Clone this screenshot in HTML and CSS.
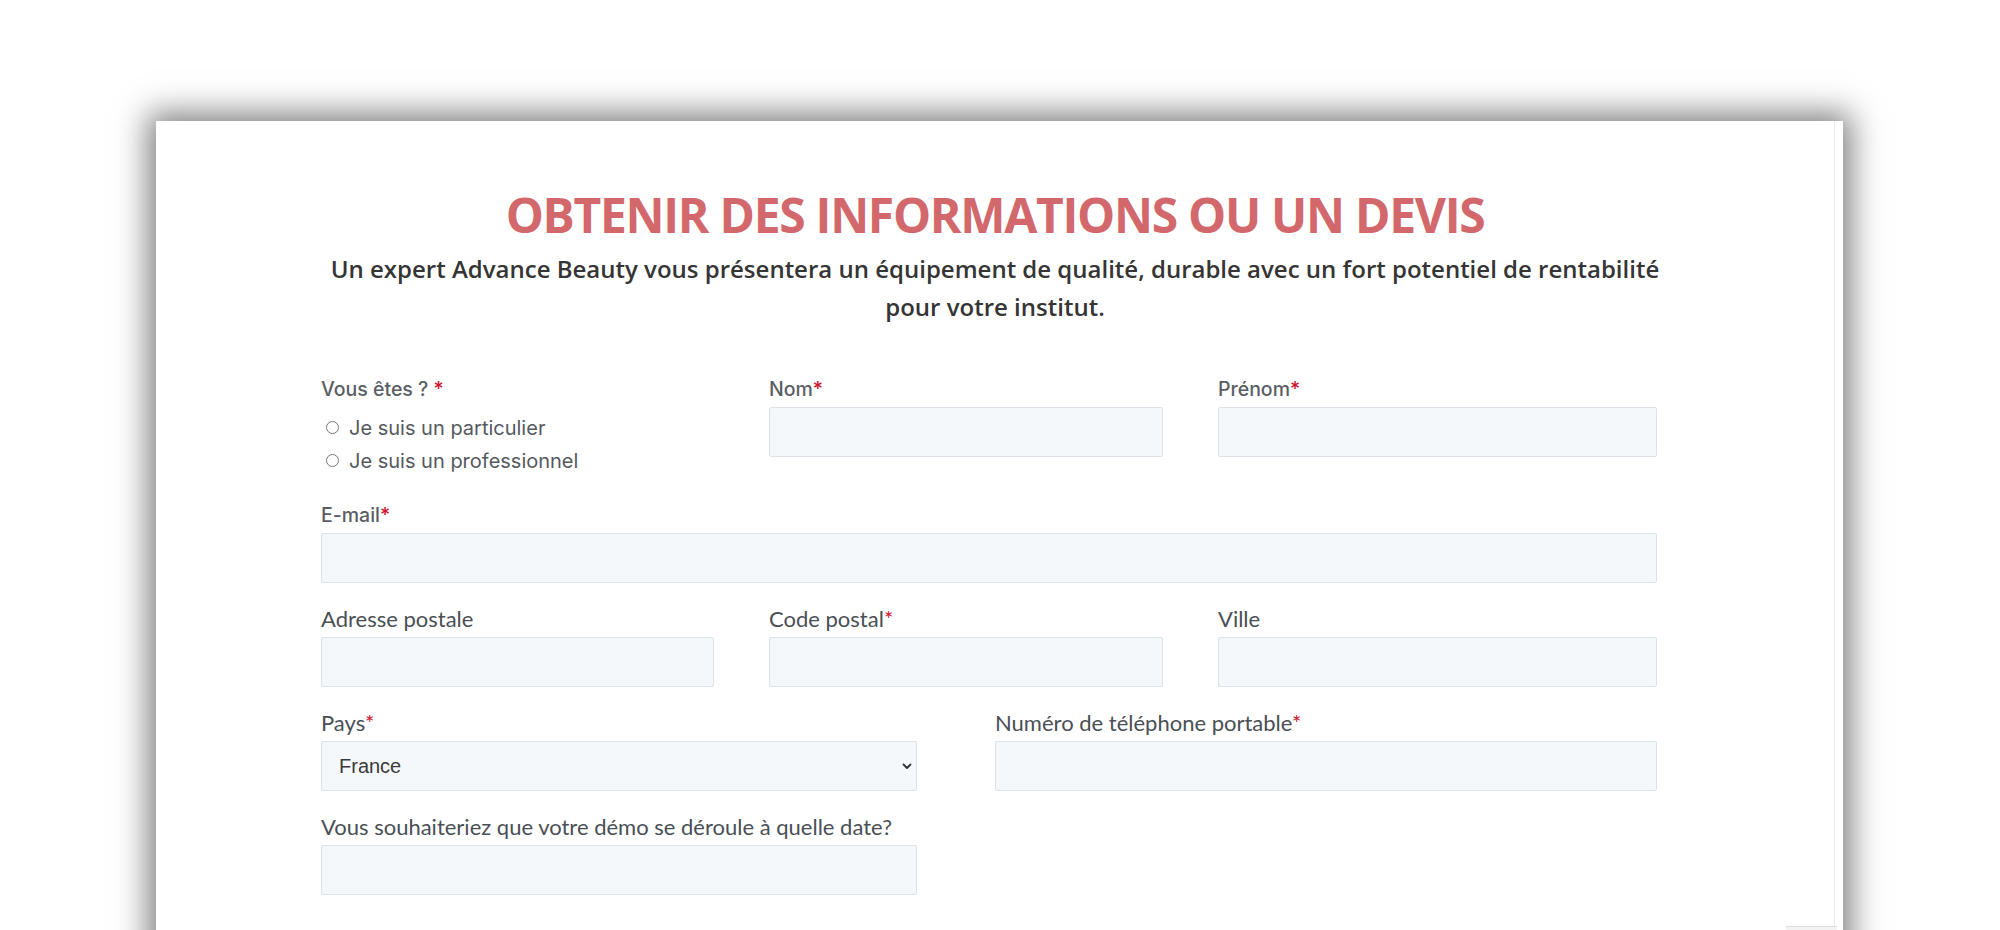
FILE: index.html
```html
<!DOCTYPE html>
<html lang="fr">
<head>
<meta charset="utf-8">
<title>Obtenir des informations ou un devis</title>
<link rel="stylesheet" href="styles.css">
</head>
<body>
<div class="page">
  <div class="card">
    <div class="inner">
      <h1 class="title">OBTENIR DES INFORMATIONS OU UN DEVIS</h1>
      <p class="lead">Un expert Advance Beauty vous présentera un équipement de qualité, durable avec un fort potentiel de rentabilité<br>pour votre institut.</p>
      <form class="form">
        <div class="row row-3 row-first">
          <div class="field">
            <div class="lbl lbl-m">Vous êtes ? <span class="req">*</span></div>
            <div class="radios">
              <label class="radio"><input type="radio" name="type" class="rb">Je suis un particulier</label>
              <label class="radio"><input type="radio" name="type" class="rb">Je suis un professionnel</label>
            </div>
          </div>
          <div class="field">
            <label class="lbl lbl-m">Nom<span class="req">*</span></label>
            <input type="text" class="inp">
          </div>
          <div class="field">
            <label class="lbl lbl-m">Prénom<span class="req">*</span></label>
            <input type="text" class="inp">
          </div>
        </div>
        <div class="row">
          <div class="field">
            <label class="lbl lbl-m">E-mail<span class="req">*</span></label>
            <input type="text" class="inp">
          </div>
        </div>
        <div class="row row-3">
          <div class="field">
            <label class="lbl lbl-l">Adresse postale</label>
            <input type="text" class="inp">
          </div>
          <div class="field">
            <label class="lbl lbl-l">Code postal<span class="req">*</span></label>
            <input type="text" class="inp">
          </div>
          <div class="field">
            <label class="lbl lbl-l">Ville</label>
            <input type="text" class="inp">
          </div>
        </div>
        <div class="row row-2">
          <div class="field">
            <label class="lbl lbl-l">Pays<span class="req">*</span></label>
            <div class="sel">
              <select class="inp select"><option>France</option></select>
              <svg class="chev" width="10" height="7" viewBox="0 0 10 7"><path d="M1.5 1.5 L5 5 L8.5 1.5" fill="none" stroke="#333" stroke-width="1.8" stroke-linecap="round" stroke-linejoin="round"/></svg>
            </div>
          </div>
          <div class="field">
            <label class="lbl lbl-l">Numéro de téléphone portable<span class="req">*</span></label>
            <input type="text" class="inp">
          </div>
        </div>
        <div class="row row-2">
          <div class="field">
            <label class="lbl lbl-l">Vous souhaiteriez que votre démo se déroule à quelle date?</label>
            <input type="text" class="inp">
          </div>
        </div>
      </form>
    </div>
    <div class="totop"></div>
  </div>
</div>
</body>
</html>
```
FILE: styles.css
```css
* { box-sizing: border-box; }
html, body { margin: 0; padding: 0; overflow: hidden; background: #ffffff; }
.page { height: 930px; overflow: hidden; padding: 121px 0 0 156px; }
.card {
  position: relative;
  width: 1687px;
  height: 900px;
  background: #ffffff;
  box-shadow: 0 0 30px 8px rgba(0, 0, 0, 0.5);
  padding-right: 8px;
}
.inner {
  width: 1679px;
  height: 900px;
  border-right: 1px solid #ececec;
  padding-top: 63px;
}
.title {
  margin: 0;
  text-align: center;
  font-family: "Open Sans", sans-serif;
  font-weight: 700;
  font-size: 48px;
  letter-spacing: -1.3px;
  line-height: 62px;
  color: #d2686b;
}
.lead {
  margin: 4px 0 0;
  text-align: center;
  font-family: "Open Sans", sans-serif;
  font-weight: 600;
  font-size: 24px;
  line-height: 38px;
  color: #353535;
}
.form { width: 1336px; margin: 51px 0 0 165px; }
.row { display: grid; grid-template-columns: 1fr; column-gap: 55px; margin-bottom: 24px; }
.row-first { margin-bottom: 26px; }
.row-3 { grid-template-columns: 393px 394px 1fr; }
.row-2 { grid-template-columns: 596px 1fr; column-gap: 78px; }
.lbl { display: block; height: 24px; line-height: 24px; margin-bottom: 6px; white-space: nowrap; }
.lbl-m { font-family: Inter, sans-serif; font-weight: 500; font-size: 19.5px; color: #5a5e64; }
.lbl-l { font-family: Lato, sans-serif; font-weight: 400; font-size: 22px; color: #4a4f55; }
.req { color: #d0112b; }
.inp {
  display: block;
  width: 100%;
  height: 50px;
  margin: 0;
  background: #f5f8fb;
  border: 1px solid #dde2e8;
  border-radius: 2px;
  outline: none;
}
.radios { padding-top: 4px; }
.radio {
  display: flex;
  align-items: center;
  height: 33px;
  font-family: Inter, sans-serif;
  font-weight: 400;
  font-size: 20px;
  color: #55595f;
}
.rb { width: 13px; height: 13px; margin: 0 10px 0 5px; }
.sel { position: relative; }
.select {
  appearance: none;
  -webkit-appearance: none;
  padding: 0 0 0 17px;
  font-family: "Liberation Sans", Arial, sans-serif;
  font-size: 20px;
  color: #3a3a3a;
}
.chev { position: absolute; right: 5px; top: 22px; }
.totop {
  position: absolute;
  left: 1630px;
  top: 805px;
  width: 51px;
  height: 10px;
  background: #f3f3f3;
  border-top: 1px solid #dddddd;
}
```
